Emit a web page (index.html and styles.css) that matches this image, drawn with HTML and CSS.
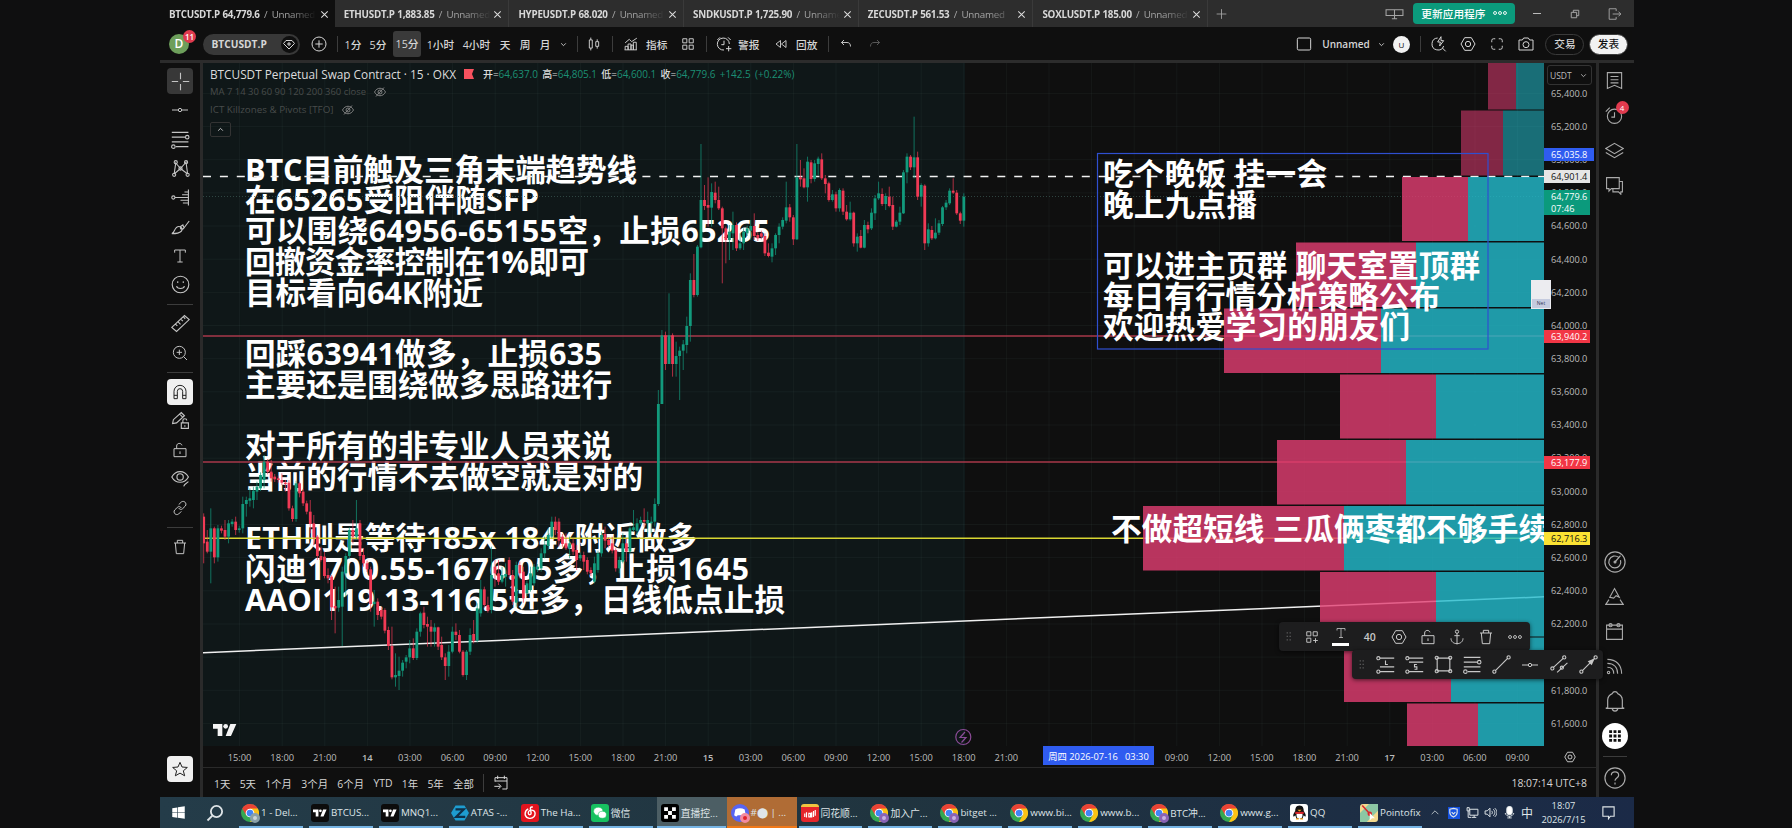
FILE: index.html
```html
<!DOCTYPE html>
<html lang="zh-CN">

<head>
    <meta charset="utf-8" />
    <meta name="viewport" content="width=device-width, initial-scale=1.0">
    <title>BTCUSDT.P 64,779.6 / Unnamed</title>
    <link rel="stylesheet" href="styles.css">
</head>

<body>
    <!-- icon sprite -->
    <svg class="sprite">
        <symbol id="close" viewBox="0 0 24 24"><path d="M5 5l14 14M19 5L5 19" /></symbol>
        <symbol id="plus" viewBox="0 0 24 24"><path d="M12 3v18M3 12h18" /></symbol>
        <symbol id="plus-circle" viewBox="0 0 24 24"><circle cx="12" cy="12" r="10.5" /><path d="M12 6.500v11M6.500 12h11" /></symbol>
        <symbol id="chev" viewBox="0 0 24 24"><path d="M4 8l8 8 8-8" /></symbol>
        <symbol id="chev-up" viewBox="0 0 24 24"><path d="M4 16l8-8 8 8" /></symbol>
        <symbol id="candles" viewBox="0 0 24 24"><path d="M4 5h5v14H4zM6.500 1v4M6.500 19v4M15 8h5v8h-5zM17.500 4v4M17.500 16v4" /></symbol>
        <symbol id="indicator" viewBox="0 0 24 24"><path d="M2 10l7-6 4 4 9-6M2 22v-6h5v6M7 22V12h5v10M12 22v-8h4v8M16 22V9h5v13M1 22h21" /></symbol>
        <symbol id="grid4" viewBox="0 0 24 24"><path d="M3 3h7v7H3zM14 3h7v7h-7zM3 14h7v7H3zM14 14h7v7h-7z" /></symbol>
        <symbol id="grid-plus" viewBox="0 0 24 24"><path d="M3 3h7v7H3zM14 3h7v7h-7zM3 14h7v7H3zM18 14v8M14 18h8" /></symbol>
        <symbol id="alarm-plus" viewBox="0 0 24 24"><path d="M20 12a9 9 0 1 0-8 9M12 7v6H8M2 6l4-4M18 2l4 4M19 15v8M15 19h8" /></symbol>
        <symbol id="alarm" viewBox="0 0 24 24"><circle cx="12" cy="13" r="9" /><path d="M12 8v6H8M1 7l5-5" /></symbol>
        <symbol id="rewind" viewBox="0 0 24 24"><path d="M11 5v14l-9-7zM22 5v14l-9-7z" /></symbol>
        <symbol id="undo" viewBox="0 0 24 24"><path d="M8 4L3 9l5 5M3 9h11c5 0 7 3 7 8" /></symbol>
        <symbol id="redo" viewBox="0 0 24 24"><path d="M16 4l5 5-5 5M21 9H10c-5 0-7 3-7 8" /></symbol>
        <symbol id="square" viewBox="0 0 24 24"><rect x="2" y="3" width="20" height="18" rx="2" /></symbol>
        <symbol id="flash-search" viewBox="0 0 24 24"><path d="M10 3a9 9 0 1 0 9 12M17 18l5 5M15 1l-5 8h4l-1 6 6-8h-4z" /></symbol>
        <symbol id="hex" viewBox="0 0 24 24"><path d="M7 2.500h10l5.500 9.500-5.500 9.500H7L1.500 12z" /><circle cx="12" cy="12" r="4" /></symbol>
        <symbol id="full" viewBox="0 0 24 24"><path d="M3 9V6a3 3 0 0 1 3-3h3M15 3h3a3 3 0 0 1 3 3v3M21 15v3a3 3 0 0 1-3 3h-3M9 21H6a3 3 0 0 1-3-3v-3" /></symbol>
        <symbol id="camera" viewBox="0 0 24 24"><path d="M1.500 6h5l2-3h7l2 3h5v15h-21z" /><circle cx="12" cy="13" r="4.500" /></symbol>
        <symbol id="cross" viewBox="0 0 24 24"><path d="M12 1v8M12 15v8M1 12h8M15 12h8" /></symbol>
        <symbol id="hline" viewBox="0 0 24 24"><path d="M0 12h9M15 12h9" /><circle cx="12" cy="12" r="2.500" /></symbol>
        <symbol id="fib" viewBox="0 0 24 24"><path d="M1 3h21M1 9h17M1 15h21M6 21h16" /><circle cx="20.500" cy="9" r="2.200" /><circle cx="3" cy="21" r="2.200" /></symbol>
        <symbol id="pattern" viewBox="0 0 24 24"><path d="M4 19L6 5l6 7 7-8 2 15M4 19l8-7 9 7" /><circle cx="4" cy="20" r="2" /><circle cx="6" cy="4" r="2" /><circle cx="12" cy="12" r="2" /><circle cx="19" cy="4" r="2" /><circle cx="21" cy="20" r="2" /></symbol>
        <symbol id="forecast" viewBox="0 0 24 24"><path d="M5 12h17M22 2v20M17 5h5M14 8.500h8M12 15.500h10M15 19h7" /><circle cx="3" cy="12" r="2" /></symbol>
        <symbol id="brush" viewBox="0 0 24 24"><path d="M1 21c4-1 3-9 9-9 4 0 5 4 3 6-3 3-8 3-12 3zM12 12c-1 4 3 5 5 1l6-8M12 12l3-2 1 3" /></symbol>
        <symbol id="text" viewBox="0 0 24 24"><path d="M4 7V3h16v4M12 3v18M8 21h8" /></symbol>
        <symbol id="smile" viewBox="0 0 24 24"><circle cx="12" cy="12" r="10.500" /><path d="M7 14c1 4 9 4 10 0M8.500 8v2M15.500 8v2" /></symbol>
        <symbol id="ruler" viewBox="0 0 24 24"><path d="M1 17L17 2l6 5L7 22zM6 13l2 2M9 10l3 3M13 7l2 2M16 4l2 2" /></symbol>
        <symbol id="zoom-in" viewBox="0 0 24 24"><circle cx="11" cy="11" r="9" /><path d="M17.500 17.500l5 5M11 7v8M7 11h8" /></symbol>
        <symbol id="magnet" viewBox="0 0 24 24"><path d="M3 22V11a9 9 0 0 1 18 0v11h-5V11a4 4 0 0 0-8 0v11zM3 17h5M16 17h5" /></symbol>
        <symbol id="pen-lock" viewBox="0 0 24 24"><path d="M2 16l1-5L13 2l4 4L7 15zM11 4l4 4M13 15h9v7h-9zM15 15v-3c0-3 5-3 5 0M17.500 18v2" /></symbol>
        <symbol id="unlock" viewBox="0 0 24 24"><path d="M3 10h18v12H3zM7 10V6c0-5 7-5 8-1M12 14v4" /></symbol>
        <symbol id="eye" viewBox="0 0 24 24"><path d="M1 10c5-9 16-9 21 0-5 9-16 9-21 0z" /><circle cx="11.500" cy="10" r="4" /><path d="M16 22c1-4 4-4 6-6" /></symbol>
        <symbol id="eye-off" viewBox="0 0 24 24"><path d="M1 12c5-10 17-10 22 0-5 10-17 10-22 0zM4 21L20 3" /><circle cx="12" cy="12" r="4" /></symbol>
        <symbol id="link" viewBox="0 0 24 24"><path d="M10 7l4-4c4-3 9 2 6 6l-4 4c-2 2-5 1-6-1M14 17l-4 4c-4 3-9-2-6-6l4-4c2-2 5-1 6 1" /></symbol>
        <symbol id="trash" viewBox="0 0 24 24"><path d="M3 6h18M8 6V2h8v4M5 6l1.500 16h11L19 6" /></symbol>
        <symbol id="star" viewBox="0 0 24 24"><path d="M12 2l3 7 8 .7-6 5 2 7.500-7-4-7 4 2-7.500-6-5 8-.7z" /></symbol>
        <symbol id="list" viewBox="0 0 24 24"><path d="M3 2h18v20l-9-4-9 4zM7 7h10M7 11h10M7 15h10" /></symbol>
        <symbol id="layers" viewBox="0 0 24 24"><path d="M12 3l11 6.500L12 16 1 9.500zM1 14.500L12 21l11-6.500" /></symbol>
        <symbol id="chat" viewBox="0 0 24 24"><path d="M2 2h16v14H8l-3 3v-3H2zM18 7h4v13h-2v3l-3-3h-7v-4" /></symbol>
        <symbol id="radar" viewBox="0 0 24 24"><circle cx="12" cy="12" r="11" /><path d="M16 7a6.500 6.500 0 1 0 2 3M12 12l6-7" /><circle cx="12" cy="12" r="1" /></symbol>
        <symbol id="prism" viewBox="0 0 24 24"><path d="M12 2l6 11-4-2-3 3-5-1zM5 16l-4 6h22l-4-6" /></symbol>
        <symbol id="calendar" viewBox="0 0 24 24"><path d="M2 4h20v18H2zM2 9h20" /><circle cx="7" cy="4" r="2" /><circle cx="17" cy="4" r="2" /></symbol>
        <symbol id="signal" viewBox="0 0 24 24"><path d="M3 3c11 0 18 7 18 18M3 8c8 0 13 5 13 13M3 13c5 0 8 3 8 8" /><circle cx="4.500" cy="19.500" r="1.500" /></symbol>
        <symbol id="bell" viewBox="0 0 24 24"><path d="M4 19V11a8 8 0 0 1 5-7c1-3 5-3 6 0a8 8 0 0 1 5 7v8l2 1H2zM9 20c0 4 6 4 6 0" /></symbol>
        <symbol id="apps" viewBox="0 0 24 24"><path class="solid" d="M2 2h5v5H2zM9.500 2h5v5h-5zM17 2h5v5h-5zM2 9.500h5v5H2zM9.500 9.500h5v5h-5zM17 9.500h5v5h-5zM2 17h5v5H2zM9.500 17h5v5h-5zM17 17h5v5h-5z" /></symbol>
        <symbol id="help" viewBox="0 0 24 24"><circle cx="12" cy="12" r="11" /><path d="M8 9c0-5 8-5 8 0 0 3-4 3-4 6M12 17v2" /></symbol>
        <symbol id="goto" viewBox="0 0 24 24"><path d="M3 10V4h18v17h-7M7 1v5M17 1v5M21 9H3M2 17h9M8 13l4 4-4 4" /></symbol>
        <symbol id="anchor" viewBox="0 0 24 24"><circle cx="12" cy="4" r="2.500" /><path d="M12 6.500V23M8 10h8M3 14c0 5 4 8 9 8s9-3 9-8" /></symbol>
        <symbol id="dots" viewBox="0 0 24 24"><circle cx="3.500" cy="12" r="2.500" /><circle cx="12" cy="12" r="2.500" /><circle cx="20.500" cy="12" r="2.500" /></symbol>
        <symbol id="grip" viewBox="0 0 10 24"><path stroke-dasharray="2 4" d="M2 4v18M7 4v18" /></symbol>
        <symbol id="long" viewBox="0 0 24 24"><path d="M5 4h18M5 15h18M5 21h18M12 7v5h3" /><circle cx="3" cy="4" r="2" /><circle cx="3" cy="21" r="2" /></symbol>
        <symbol id="short" viewBox="0 0 24 24"><path d="M5 4h18M5 9h18M5 21h18M15 12h-3v3h3v3h-3" /><circle cx="3" cy="4" r="2" /><circle cx="3" cy="21" r="2" /></symbol>
        <symbol id="rect" viewBox="0 0 24 24"><path d="M4 4h16v16H4z" /><circle cx="3.500" cy="3.500" r="2" /><circle cx="20.500" cy="3.500" r="2" /><circle cx="3.500" cy="20.500" r="2" /><circle cx="20.500" cy="20.500" r="2" /></symbol>
        <symbol id="trend" viewBox="0 0 24 24"><path d="M4 20L20 4" /><circle cx="3" cy="21" r="2" /><circle cx="21" cy="3" r="2" /></symbol>
        <symbol id="channel" viewBox="0 0 24 24"><path d="M4 16L17 4M9 22l13-12" /><circle cx="3" cy="17" r="2" /><circle cx="18" cy="3" r="2" /><circle cx="15" cy="16" r="2" /></symbol>
        <symbol id="arrow" viewBox="0 0 24 24"><path d="M4 20L20 4" /><path class="solid" d="M20 4l-9 4 5 5z" /><circle cx="3" cy="21" r="2" /><circle cx="21" cy="3" r="2" /></symbol>
        <symbol id="screens" viewBox="0 0 36 24"><path d="M2 4h32v11H2zM18 4v17M13 21h10" /></symbol>
        <symbol id="exit" viewBox="0 0 24 24"><path d="M14 7V3H2v18h12v-4M8 12h14M18 8l4 4-4 4" /></symbol>
        <symbol id="restore" viewBox="0 0 24 24"><path d="M3 8h13v13H3zM8 8V3h13v13h-5" /></symbol>
        <symbol id="chrome" viewBox="0 0 24 24">
            <circle class="f-green" cx="12" cy="12" r="12" />
            <path class="f-red" d="M1.600 6A12 12 0 0 1 22.400 6L12 12z" /><path class="f-red" d="M1.600 6L7 15l5-3 10.400-6z" />
            <path class="f-yellow" d="M22.400 6A12 12 0 0 1 12 24l5-9-5-9z" />
            <circle class="f-white" cx="12" cy="12" r="5.800" /><circle class="f-blue" cx="12" cy="12" r="4.500" />
        </symbol>
        <symbol id="tv" viewBox="0 0 36 24"><path class="solid" d="M0 3h14v18H7V10H0zM26 3h9l-8 18h-8z" /><circle class="solid" cx="19" cy="6.500" r="3.500" /></symbol>
    </svg>

    <div class="screen">
        <header class="tabs">
            <div class="tab active"><span><b>BTCUSDT.P 64,779.6</b> / Unnamed</span><svg class="i"><use href="#close" /></svg></div>
            <div class="tab"><span><b>ETHUSDT.P 1,883.85</b> / Unnamed</span><svg class="i"><use href="#close" /></svg></div>
            <div class="tab"><span><b>HYPEUSDT.P 68.020</b> / Unnamed</span><svg class="i"><use href="#close" /></svg></div>
            <div class="tab"><span><b>SNDKUSDT.P 1,725.90</b> / Unnamed</span><svg class="i"><use href="#close" /></svg></div>
            <div class="tab"><span><b>ZECUSDT.P 561.53</b> / Unnamed</span><svg class="i"><use href="#close" /></svg></div>
            <div class="tab"><span><b>SOXLUSDT.P 185.00</b> / Unnamed</span><svg class="i"><use href="#close" /></svg></div>
            <svg class="i new-tab"><use href="#plus" /></svg>
            <div class="window-tools">
                <svg class="i wide"><use href="#screens" /></svg>
                <button class="update">更新应用程序 <svg class="i"><use href="#dots" /></svg></button>
                <span class="min"></span>
                <svg class="i small"><use href="#restore" /></svg>
                <svg class="i"><use href="#exit" /></svg>
            </div>
        </header>

        <nav class="toolbar">
            <span class="avatar">D<em>11</em></span>
            <span class="symbol-pill">BTCUSDT.P<i><svg class="i"><path d="M4 3.500h6l2.500 3L7 12 1.500 6.500zM7 5v4M5 7h4" /></svg></i></span>
            <svg class="i l"><use href="#plus-circle" /></svg>
            <hr>
            <span>1分</span><span>5分</span><span class="on">15分</span><span>1小时</span><span>4小时</span>
            <span>天</span><span>周</span><span>月</span>
            <svg class="i xs"><use href="#chev" /></svg>
            <hr>
            <svg class="i"><use href="#candles" /></svg>
            <hr>
            <svg class="i"><use href="#indicator" /></svg><span class="lbl">指标</span>
            <svg class="i"><use href="#grid4" /></svg>
            <hr>
            <svg class="i l"><use href="#alarm-plus" /></svg><span class="lbl">警报</span>
            <svg class="i s"><use href="#rewind" /></svg><span class="lbl">回放</span>
            <hr>
            <svg class="i s"><use href="#undo" /></svg>
            <svg class="i s dim"><use href="#redo" /></svg>
            <span></span>
            <svg class="i l"><use href="#square" /></svg>
            <span class="name">Unnamed</span>
            <svg class="i xs"><use href="#chev" /></svg>
            <span class="user">U</span>
            <hr>
            <svg class="i l"><use href="#flash-search" /></svg>
            <svg class="i l"><use href="#hex" /></svg>
            <svg class="i"><use href="#full" /></svg>
            <svg class="i l"><use href="#camera" /></svg>
            <span class="pill">交易</span>
            <span class="pill white">发表</span>
        </nav>

        <main class="main">
            <aside class="left-tools">
                <span class="tool gray"><svg class="i xl"><use href="#cross" /></svg></span>
                <span class="tool"><svg class="i l"><use href="#hline" /></svg></span>
                <span class="tool"><svg class="i xl"><use href="#fib" /></svg></span>
                <span class="tool"><svg class="i xl"><use href="#pattern" /></svg></span>
                <span class="tool"><svg class="i xl"><use href="#forecast" /></svg></span>
                <span class="tool"><svg class="i xl"><use href="#brush" /></svg></span>
                <span class="tool"><svg class="i l"><use href="#text" /></svg></span>
                <span class="tool"><svg class="i xl"><use href="#smile" /></svg></span>
                <hr>
                <span class="tool"><svg class="i xl"><use href="#ruler" /></svg></span>
                <span class="tool"><svg class="i l"><use href="#zoom-in" /></svg></span>
                <hr>
                <span class="tool white"><svg class="i l"><use href="#magnet" /></svg></span>
                <span class="tool"><svg class="i xl"><use href="#pen-lock" /></svg></span>
                <span class="tool"><svg class="i l"><use href="#unlock" /></svg></span>
                <span class="tool"><svg class="i xl"><use href="#eye" /></svg></span>
                <span class="tool"><svg class="i l"><use href="#link" /></svg></span>
                <hr>
                <span class="tool"><svg class="i l"><use href="#trash" /></svg></span>
                <span class="tool white last"><svg class="i l"><use href="#star" /></svg></span>
            </aside>

            <section class="chart">
                <div class="pane">
                    <svg class="plot" viewBox="203 63 1341 683">
                        <rect class="session" x="203" y="63" width="762" height="683" />
                        <g id="grid"></g>
                        <g class="note">
                            <text x="245" y="180.700" textLength="392">BTC目前触及三角末端趋势线</text>
                            <text x="245" y="211.400" textLength="294">在65265受阻伴随SFP</text>
                            <text x="245" y="242.100" textLength="525">可以围绕64956-65155空，止损65265</text>
                            <text x="245" y="272.800" textLength="344">回撤资金率控制在1%即可</text>
                            <text x="245" y="303.500" textLength="238">目标看向64K附近</text>
                            <text x="245" y="364.900" textLength="357">回踩63941做多，止损635</text>
                            <text x="245" y="395.600" textLength="367">主要还是围绕做多思路进行</text>
                            <text x="245" y="457" textLength="367">对于所有的非专业人员来说</text>
                            <text x="245" y="487.700" textLength="398">当前的行情不去做空就是对的</text>
                            <text x="245" y="549.100" textLength="452">ETH则是等待185x 184x附近做多</text>
                            <text x="245" y="579.800" textLength="504">闪迪1700.55-1676.05多，止损1645</text>
                            <text x="245" y="610.500" textLength="540">AAOI119.13-116.5进多，日线低点止损</text>
                        </g>
                        <path class="dash" d="M203 176.500H1544" />
                        <path class="last-price" d="M203 196.500H1544" />
                        <path class="red-line" d="M203 336H1544M203 462H1544" />
                        <path class="yellow-line" d="M203 538.300H1544" />
                        <path class="trend" d="M203 652.700L1544 596.800" />
                        <g id="profile"></g>
                        <g id="candle-layer"></g>
                        <rect class="selection" x="1097.500" y="153.500" width="390.500" height="195.500" />
                        <g class="note">
                            <text x="1103" y="184.800" textLength="224">吃个晚饭 挂一会</text>
                            <text x="1103" y="215.500" textLength="154">晚上九点播</text>
                            <text x="1103" y="276.900" textLength="377">可以进主页群 聊天室置顶群</text>
                            <text x="1103" y="307.600" textLength="337">每日有行情分析策略公布</text>
                            <text x="1103" y="338.300" textLength="307">欢迎热爱学习的朋友们</text>
                            <text x="1111" y="539.500" textLength="438">不做超短线 三瓜俩枣都不够手续</text>
                        </g>
                        <g class="flash"><circle cx="963.300" cy="737" r="7.500" /><path d="M965 732l-5 5.500h6l-4.500 5" /></g>
                    </svg>
                    <div class="legend">
                        <div class="title">BTCUSDT Perpetual Swap Contract · 15 · OKX
                            <svg class="flag" viewBox="0 0 10 10"><path d="M0 0h10L8 5l2 5H0z" /></svg>
                            <small>开=<b>64,637.0</b> 高=<b>64,805.1</b> 低=<b>64,600.1</b> 收=<b>64,779.6 +142.5 (+0.22%)</b></small>
                        </div>
                        <div class="study">MA 7 14 30 60 90 120 200 360 close <svg class="i s"><use href="#eye-off" /></svg></div>
                        <div class="study wide">ICT Killzones &amp; Pivots [TFO] <svg class="i s"><use href="#eye-off" /></svg></div>
                        <div class="fold"><svg class="i xs"><use href="#chev-up" /></svg></div>
                    </div>
                    <svg class="tv-logo"><use href="#tv" /></svg>
                </div>

                <div class="price-axis" id="priceAxis">
                    <span class="unit">USDT <svg class="i xs"><use href="#chev" /></svg></span>
                    <span class="tag blue">65,035.8</span>
                    <span class="tag light">64,901.4</span>
                    <span class="tag green">64,779.6<br>07:46</span>
                    <span class="tag red r1">63,940.2</span>
                    <span class="tag red r2">63,177.9</span>
                    <span class="tag yellow">62,716.3</span>
                </div>
                <div class="net"><span>Net</span></div>

                <div class="time-axis">
                    <div id="timeAxis"></div>
                    <span class="cursor-time">周四 2026-07-16 &nbsp; 03:30</span>
                </div>
                <div class="corner"><svg class="i s"><use href="#hex" /></svg></div>

                <footer class="ranges">
                    <span>1天</span><span>5天</span><span>1个月</span><span>3个月</span><span>6个月</span><span>YTD</span><span>1年</span><span>5年</span><span>全部</span>
                    <hr>
                    <svg class="i l"><use href="#goto" /></svg>
                    <span class="clock">18:07:14 UTC+8</span>
                </footer>
            </section>

            <aside class="right-tools">
                <span><svg class="i xl"><use href="#list" /></svg></span>
                <span><svg class="i xl"><use href="#alarm" /></svg><em>4</em></span>
                <span><svg class="i xl"><use href="#layers" /></svg></span>
                <span><svg class="i xl"><use href="#chat" /></svg></span>
                <div class="push"></div>
                <span><svg class="i xxl"><use href="#radar" /></svg></span>
                <span><svg class="i xl"><use href="#prism" /></svg></span>
                <span><svg class="i xl"><use href="#calendar" /></svg></span>
                <span><svg class="i xl"><use href="#signal" /></svg></span>
                <span><svg class="i xxl"><use href="#bell" /></svg></span>
                <span class="round"><svg class="i"><use href="#apps" /></svg></span>
                <hr>
                <span class="help"><svg class="i xxl"><use href="#help" /></svg></span>
            </aside>

            <div class="floating edit">
                <svg class="grip"><use href="#grip" /></svg>
                <span><svg class="i"><use href="#grid-plus" /></svg></span>
                <span class="color"><svg class="i"><use href="#text" /></svg></span>
                <span>40</span>
                <span><svg class="i l"><use href="#hex" /></svg></span>
                <span><svg class="i l"><use href="#unlock" /></svg></span>
                <span><svg class="i l"><use href="#anchor" /></svg></span>
                <span><svg class="i l"><use href="#trash" /></svg></span>
                <span><svg class="i"><use href="#dots" /></svg></span>
            </div>
            <div class="floating favs">
                <svg class="grip"><use href="#grip" /></svg>
                <span><svg class="i xl"><use href="#long" /></svg></span>
                <span><svg class="i xl"><use href="#short" /></svg></span>
                <span><svg class="i xl"><use href="#rect" /></svg></span>
                <span><svg class="i xl"><use href="#fib" /></svg></span>
                <span><svg class="i xl"><use href="#trend" /></svg></span>
                <span><svg class="i l"><use href="#hline" /></svg></span>
                <span><svg class="i xl"><use href="#channel" /></svg></span>
                <span><svg class="i xl"><use href="#arrow" /></svg></span>
            </div>
        </main>

        <div class="taskbar">
            <svg class="win" viewBox="0 0 24 24"><path d="M2 5l8-1.200V11.500H2zM11 3.600L22 2v9.500H11zM2 12.500h8v7.700L2 19zM11 12.500h11V22l-11-1.600z" /></svg>
            <svg class="search" viewBox="0 0 24 24"><circle cx="14" cy="10" r="7.500" /><path d="M8.500 15.500L2 22" /></svg>
            <div class="apps">
                <div class="app"><svg class="ico"><use href="#chrome" /></svg><u class="badge-user pale"></u>1 - Del...</div>
                <div class="app"><b class="ico black"><svg><use href="#tv" /></svg></b>BTCUS...</div>
                <div class="app"><b class="ico black"><svg><use href="#tv" /></svg></b>MNQ1...</div>
                <div class="app"><svg class="ico" viewBox="0 0 24 24"><path class="atas" d="M6 2h12l6 10-6 10H6L0 12z" /><path class="atas-z" d="M6 7h11L7 17h12" /></svg>ATAS -...</div>
                <div class="app"><b class="ico netease"><svg viewBox="0 0 24 24"><path d="M17 2c-4-1-5 1-4 5l1 5c0 4-5 4-5 0 0-3 3-5 6-5 6 0 7 7 4 11-4 5-13 4-15-2-1-5 1-9 5-11" /></svg></b>The Ha...</div>
                <div class="app"><b class="ico wechat"><svg viewBox="0 0 24 24"><ellipse cx="9" cy="9" rx="8" ry="7" /><ellipse cx="16" cy="15" rx="7" ry="6" /></svg></b>微信</div>
                <div class="app hover"><b class="ico okx"><svg viewBox="0 0 24 24"><path d="M2 2h6.500v6.500H2zM15.500 2H22v6.500h-6.500zM8.700 8.700h6.600v6.600H8.700zM2 15.500h6.500V22H2zM15.500 15.500H22V22h-6.500z" /></svg></b>直播控...</div>
                <div class="app alert"><b class="ico discord"><svg viewBox="0 0 24 24"><path d="M4 6c5-3 11-3 16 0l2 10c-3 3-5 2-6 0H8c-1 2-3 3-6 0z" /></svg></b><u class="badge-user rec"></u>#⬤ | ...</div>
                <div class="app"><b class="ico ths"><svg viewBox="0 0 24 24"><path d="M3 11v6M6 9v9M10 11h3v6h-3zM15 9v9M18 7v10M21 5v10" /></svg></b>同花顺...</div>
                <div class="app"><svg class="ico"><use href="#chrome" /></svg><u class="badge-user"></u>加入广...</div>
                <div class="app"><svg class="ico"><use href="#chrome" /></svg><u class="badge-user"></u>bitget ...</div>
                <div class="app"><svg class="ico"><use href="#chrome" /></svg>www.bi...</div>
                <div class="app"><svg class="ico"><use href="#chrome" /></svg>www.b...</div>
                <div class="app"><svg class="ico"><use href="#chrome" /></svg><u class="badge-user"></u>BTC冲...</div>
                <div class="app"><svg class="ico"><use href="#chrome" /></svg>www.g...</div>
                <div class="app"><b class="ico qq"><svg viewBox="0 0 24 24"><path class="k" d="M12 2c5 0 6 4 6 8 2 3 4 7 2 8l-2-2-2 5H8l-2-5-2 2c-2-1 0-5 2-8 0-4 1-8 6-8z" /><path class="w" d="M8 13h8c1 5-1 8-4 8s-5-3-4-8z" /><path class="r" d="M7 12h10v1H7z" /><path class="o" d="M9 8h6l-3 2.500zM7 20h4v2H7zM13 20h4v2h-4z" /></svg></b>QQ</div>
                <div class="app"><b class="ico pfix"><svg viewBox="0 0 24 24"><path class="g" d="M0 12L12 0h12v9L9 24H0z" /><path class="r" d="M3 2l10 11" /><circle class="r" cx="13" cy="13" r="2" /><path class="w" d="M13 12v10l3-3h4z" /></svg></b>Pointofix</div>
            </div>
            <div class="tray">
                <svg class="i"><use href="#chev-up" /></svg>
                <b class="shield"><svg viewBox="0 0 24 24"><path d="M12 3l8 2v7c0 5-4 8-8 10-4-2-8-5-8-10V5zM8 11l4 4 4-4" /></svg></b>
                <svg viewBox="0 0 24 24"><path d="M7 6h15v11H7zM11 21h8M15 17v4M2 3v6h4V3zM4 9v12h6" /></svg>
                <svg viewBox="0 0 24 24"><path d="M2 9h4l5-5v16l-5-5H2zM14 9c2 2 2 4 0 6M17 6c4 3 4 9 0 12M20 4c5 5 5 11 0 16" /></svg>
                <svg class="mic" viewBox="0 0 24 24"><rect x="7" y="1" width="10" height="15" rx="4" /><path d="M4 13c2 8 14 8 16 0M12 19v3M8 22h8" /></svg>
                <span>中</span>
                <div class="date">18:07<br>2026/7/15</div>
                <svg class="notif" viewBox="0 0 24 24"><path d="M3 3h18v15h-6l-3 4v-4H3z" /></svg>
            </div>
        </div>
    </div>

    <script src="chart.js"></script>
</body>

</html>
```
FILE: styles.css
```css
* {
    box-sizing: border-box;
}

body {
    margin: 0;
    background: #0f0f10;
    color: #d6d6d6;
    font: 10.5px "Open Sans", "Noto Sans CJK SC", sans-serif;
    overflow: hidden;
}

hr {
    margin: 0;
    border: 0;
    background: #3c3c3c;
}

em,
i,
u {
    font-style: normal;
    text-decoration: none;
}

svg {
    fill: none;
    stroke: currentColor;
    flex: none;
}

.sprite {
    position: absolute;
    width: 0;
    height: 0;
}

.solid { fill: currentColor; stroke: none; }
.f-green { fill: #34a853; stroke: none; }
.f-red { fill: #ea4335; stroke: none; }
.f-yellow { fill: #fbc116; stroke: none; }
.f-white { fill: #fff; stroke: none; }
.f-blue { fill: #4285f4; stroke: none; }

/* icon sizes */
.i { width: 14px; height: 14px; stroke-width: 1.6; }
.i.xs { width: 7px; height: 7px; stroke-width: 3; }
.i.s { width: 12px; height: 12px; stroke-width: 1.8; }
.i.l { width: 16px; height: 16px; stroke-width: 1.5; }
.i.xl { width: 19px; height: 19px; stroke-width: 1.4; }
.i.xxl { width: 22px; height: 22px; stroke-width: 1.3; }
.dim { opacity: .4; }

.screen {
    width: 1472px;
    height: 828px;
    margin: 0 auto;
    display: grid;
    grid-template-rows: 27px 36px 734px 31px;
    background: #0f0f0f;
}

/* tabs */
.tabs {
    display: flex;
    align-items: center;
    background: #2d2d2d;
    font-size: 9.8px;
    color: #a5a5a5;
}

.tab {
    width: 174.700px;
    height: 27px;
    padding: 1px 5px 0 9px;
    display: flex;
    align-items: center;
    justify-content: space-between;
    border-right: 1px solid #3a3a3a;
}

.tab span {
    width: 147px;
    overflow: hidden;
    white-space: nowrap;
    letter-spacing: -.25px;
    word-spacing: 2px;
    mask-image: linear-gradient(90deg, #000 82%, transparent 100%);
}

.tab b {
    font-weight: 700;
    word-spacing: .3px;
    color: #d8d8d8;
}

.tab .i {
    width: 11px;
    height: 11px;
    stroke-width: 2.2;
    color: #ddd;
}

.tab.active {
    background: #0f0f0f;
    border: 0;
}

.new-tab {
    width: 13px;
    margin-left: 7px;
}

.window-tools {
    margin-left: auto;
    padding-right: 12px;
    display: flex;
    align-items: center;
}

.window-tools .wide {
    width: 19px;
    margin-right: 9px;
    stroke-width: 2;
}

.update {
    width: 102px;
    height: 21px;
    padding: 0 0 1px;
    border: 0;
    border-radius: 4px;
    background: #0b9a7c;
    color: #fff;
    font: 500 10.7px "Noto Sans CJK SC", sans-serif;
    display: flex;
    align-items: center;
    justify-content: center;
    gap: 7px;
}

.min {
    width: 8px;
    height: 1px;
    margin: 0 29px 0 18px;
    background: #bbb;
}

.window-tools .small {
    width: 10px;
    margin-right: 28px;
    stroke-width: 2.4;
}

/* top toolbar */
.toolbar {
    display: grid;
    grid-template-columns: 41px 100px 35px 3px 28px 22px 36px 31px 41px 16px 24px 16px 21px 6px 28px 8px 30px 27px 30px 6px 29px 28px 30px 26px 12px 24px 34px 1fr 26px 58px 14px 25px 14px 22px 36px 23px 34px 44px 43px 4px;
    align-items: center;
    justify-items: center;
    padding-top: 1px;
    height: 36px;
    border-bottom: 3px solid #2c2c2c;
    font-size: 10.7px;
    font-weight: 500;
}

.toolbar hr {
    width: 1px;
    height: 16px;
}

.toolbar .lbl {
    justify-self: start;
}

.toolbar .on {
    width: 28px;
    height: 26px;
    border-radius: 3px;
    background: #3a3a3a;
    text-align: center;
    line-height: 26px;
}

.avatar {
    position: relative;
    width: 20px;
    height: 20px;
    margin-right: 3px;
    border-radius: 50%;
    background: #6d9f5b;
    color: #fff;
    font-size: 12px;
    font-weight: 600;
    line-height: 20px;
    text-align: center;
}

.avatar em,
.right-tools em {
    position: absolute;
    top: -4px;
    right: -7px;
    width: 13px;
    height: 13px;
    border-radius: 50%;
    background: #e03a4e;
    color: #fff;
    font-size: 8px;
    line-height: 13px;
    text-align: center;
}

.symbol-pill {
    width: 97px;
    height: 21px;
    padding: 0 2px 0 9px;
    border-radius: 11px;
    background: #383838;
    display: flex;
    align-items: center;
    justify-content: space-between;
    font-size: 10.2px;
    font-weight: 700;
}

.symbol-pill i {
    width: 17px;
    height: 17px;
    border-radius: 50%;
    background: #0f0f0f;
    display: grid;
    place-items: center;
}

.symbol-pill .i {
    stroke-width: 1;
}

.toolbar .name {
    font-size: 10px;
    font-weight: 600;
}

.user {
    width: 17px;
    height: 17px;
    border-radius: 50%;
    background: #f2f2f2;
    color: #111;
    font-size: 8px;
    line-height: 17px;
    text-align: center;
}

.pill {
    width: 39px;
    height: 21px;
    border: 1px solid #3a3a3a;
    border-radius: 11px;
    line-height: 19px;
    text-align: center;
}

.pill.white {
    background: #f2f2f2;
    color: #111;
}

/* main area */
.main {
    position: relative;
    display: grid;
    grid-template-columns: 40px 1396px 36px;
}

.left-tools {
    display: flex;
    flex-direction: column;
    align-items: center;
    padding: 3.500px 0 15px;
    height: 734px;
    color: #c4c4c4;
}

.left-tools .tool {
    width: 26px;
    height: 26px;
    margin: 1.550px 0;
    border-radius: 4px;
    display: grid;
    place-items: center;
    flex: none;
}

.left-tools .tool.gray { background: #383838; }
.left-tools .tool.white { background: #f0f0f0; color: #222; }
.left-tools .tool.last { margin: auto 0 0; }

.left-tools hr {
    width: 26px;
    height: 1px;
    margin: 4.400px 0;
    flex: none;
}

.chart {
    display: grid;
    grid-template-columns: 1341px 52px;
    grid-template-rows: 683px 22px 29px;
    border-left: 3px solid #2a2a2a;
    border-right: 3px solid #2a2a2a;
    width: 1399px;
    position: relative;
}

.pane {
    position: relative;
    overflow: hidden;
}

.plot {
    display: block;
    width: 1341px;
    height: 683px;
}

.session { fill: #0f1718; stroke: none; }
.grid-line { stroke: #8fb3a8; stroke-opacity: .06; }
.note text { fill: #fff; stroke: none; font: 700 30.6px "Open Sans", "Noto Sans CJK SC", sans-serif; }
.dash { stroke: #f2f2f2; stroke-width: 1.4; stroke-dasharray: 8 8.9; }
.last-price { stroke: #3c5a55; stroke-width: .7; stroke-dasharray: 1 2; }
.red-line { stroke: #a8394a; stroke-width: 1.3; }
.yellow-line { stroke: #d8d632; stroke-width: 1.4; }
.trend { stroke: #f0f0f0; stroke-width: 1.5; }
.selection { stroke: #2f4fd0; stroke-width: 1.2; }
.sell { fill: #e23d72; stroke: none; fill-opacity: .8; }
.buy { fill: #23bdce; stroke: none; fill-opacity: .8; }
.far { fill-opacity: .55; }
.up { fill: #129a7c; stroke: #129a7c; }
.down { fill: #f03a55; stroke: #f03a55; }
.flash { stroke: #8a4b96; stroke-width: 1.2; }

.legend {
    position: absolute;
    top: 1.500px;
    left: 7px;
}

.title {
    display: flex;
    align-items: center;
    height: 18px;
    font-size: 11.8px;
    font-weight: 500;
    white-space: nowrap;
    color: #dcdcdc;
}

.title .flag {
    width: 10px;
    height: 10px;
    margin: 0 9px 0 8px;
    fill: #f7525f;
    stroke: none;
}

.title small {
    font-size: 9.950px;
    word-spacing: 1.700px;
}

.title b {
    font-weight: 400;
    color: #1c8f74;
}

.study {
    display: flex;
    align-items: center;
    gap: 8px;
    height: 18.300px;
    font-size: 9.450px;
    color: #484c4b;
}

.study.wide {
    font-size: 9.800px;
}

.study .i {
    color: #8a8a8a;
}

.fold {
    width: 21px;
    height: 15px;
    margin-top: 3px;
    border: 1px solid #333;
    border-radius: 2px;
    display: grid;
    place-items: center;
}

.tv-logo {
    position: absolute;
    left: 10px;
    bottom: 8px;
    width: 24px;
    height: 16px;
    color: #f5f5f5;
}

.price-axis {
    position: relative;
    padding-top: 13.700px;
    font-size: 9.200px;
    color: #bcbcbc;
}

.price-axis .tick {
    height: 33.160px;
    padding-left: 7px;
    display: flex;
    align-items: center;
}

.unit {
    position: absolute;
    top: 2px;
    left: 3px;
    width: 45px;
    height: 20px;
    padding: 0 4px 0 2px;
    border: 1px solid #333;
    border-radius: 3px;
    background: #0f0f0f;
    display: flex;
    align-items: center;
    justify-content: space-between;
    font-size: 8.500px;
}

.tag {
    position: absolute;
    left: 0;
    width: 46px;
    height: 13px;
    padding-left: 7px;
    line-height: 13px;
    color: #fff;
}

.tag.blue { top: 85px; background: #2f5cf0; width: 50px; }
.tag.light { top: 107px; background: #e6e6e6; color: #111; }
.tag.green { top: 127px; height: 25px; line-height: 11.500px; background: #0b9a7c; padding-top: 1px; }
.tag.red { background: #f23645; }
.tag.r1 { top: 266.500px; }
.tag.r2 { top: 392.500px; }
.tag.yellow { top: 469px; background: #fbe233; color: #111; }

.net {
    position: absolute;
    left: 1328px;
    top: 217px;
    width: 20px;
    height: 29px;
    padding: 19px 1px 1px;
    background: #ececf0;
    font-size: 5px;
    line-height: 9px;
    text-align: center;
    color: #335;
}

.net span {
    display: block;
    background: #c5cbdf;
}

.time-axis {
    position: relative;
    border-bottom: 1px solid #2a2a2a;
    overflow: hidden;
    font-size: 9.300px;
    color: #bcbcbc;
}

#timeAxis {
    display: flex;
    padding-left: 15.300px;
}

#timeAxis span {
    width: 42.600px;
    flex: none;
    text-align: center;
    line-height: 23px;
}

#timeAxis .day {
    font-weight: 600;
}

.cursor-time {
    position: absolute;
    left: 840px;
    top: 0;
    width: 111px;
    height: 19px;
    background: #2f5cf0;
    color: #fff;
    line-height: 22px;
    text-align: center;
    white-space: nowrap;
}

.corner {
    display: grid;
    place-items: center;
    border-bottom: 1px solid #2a2a2a;
}

.ranges {
    grid-column: 1 / 3;
    display: flex;
    align-items: center;
    gap: 9.300px;
    padding: 1px 9px 0 11px;
    font-size: 10.400px;
}

.ranges hr {
    width: 1px;
    height: 18px;
}

.ranges .clock {
    margin-left: auto;
}

.right-tools {
    display: flex;
    flex-direction: column;
    align-items: center;
    padding-left: 1px;
    color: #aaa;
}

.right-tools span {
    position: relative;
    width: 26px;
    height: 34.900px;
    display: grid;
    place-items: center;
    flex: none;
}

.right-tools em {
    top: 3px;
    right: -1px;
}

.push {
    height: 341.500px;
}

.right-tools .round {
    height: 26px;
    margin: 4px 0 7px;
    border-radius: 50%;
    background: #fff;
    color: #111;
}

.right-tools hr {
    width: 24px;
    height: 1px;
    margin: 0 0 4px;
}

/* floating drawing bars */
.floating {
    position: absolute;
    width: 251px;
    height: 29px;
    padding-left: 6px;
    border-radius: 4px;
    background: #1d1d1e;
    box-shadow: 0 1px 4px rgba(0, 0, 0, .6);
    display: flex;
    align-items: center;
    color: #c8c8c8;
}

.floating span {
    width: 29.200px;
    display: grid;
    place-items: center;
    font-weight: 600;
}

.floating .grip {
    width: 8px;
    height: 14px;
    margin-right: 4.500px;
    stroke-width: 2;
    opacity: .4;
}

.floating .color .i {
    padding-bottom: 2px;
}

.floating .color::after {
    content: "";
    width: 17px;
    height: 2.500px;
    margin-top: 2px;
    background: #fff;
}

.edit { left: 1118.500px; top: 559px; }
.favs { left: 1192px; top: 587px; }

/* windows taskbar */
.taskbar {
    display: flex;
    align-items: center;
    background: linear-gradient(90deg, #243c49, #20343f 50%, #1b2a47);
    color: #dfe5e8;
    font-size: 9.800px;
}

.taskbar .win {
    width: 15px;
    height: 15px;
    margin: 0 20px 0 11px;
    fill: #fff;
    stroke: none;
}

.taskbar .search {
    width: 18px;
    height: 18px;
    margin-right: 13px;
    stroke-width: 2.4;
}

.apps {
    display: flex;
}

.app {
    position: relative;
    width: 69.940px;
    height: 31px;
    padding: 0 0 0 4px;
    display: flex;
    align-items: center;
    gap: 2px;
    white-space: nowrap;
}

.app::after {
    content: "";
    position: absolute;
    left: 2px;
    right: 4px;
    bottom: 0;
    height: 2px;
    background: #76b4e4;
}

.app.hover { background: #4c5e64; }
.app.alert { background: #b06c35; }
.app.hover::after { left: 0; right: 1px; }
.app.alert::after { left: 0; right: 0; background: #f07818; }

.ico {
    width: 18px;
    height: 18px;
    border-radius: 3px;
    display: grid;
    place-items: center;
    flex: none;
}

.ico svg {
    width: 14px;
    height: 14px;
}

.black { background: #0c0c0c; color: #fff; }
.atas { fill: #1e9ccf; stroke: none; }
.atas-z { stroke: #0e2f48; stroke-width: 3; }
.netease { background: #e3141e; color: #fff; }
.netease svg { stroke-width: 2.4; }
.wechat { background: #17c160; }
.wechat svg { fill: #fff; stroke: #17c160; }
.okx { background: #000; }
.okx svg { fill: #fff; stroke: none; }
.discord { background: #5865f2; border-radius: 50%; }
.discord svg { fill: #fff; stroke: none; }
.ths { background: #e5252b; border-top: 3px solid #f0c440; color: #fff; }
.ths svg { stroke-width: 2; }
.qq { background: #fff; }
.pfix { background: #f2d98e; }
.ico .k { fill: #111; stroke: none; }
.ico .w { fill: #fff; stroke: none; }
.ico .r { fill: #d8262c; stroke: #d8262c; stroke-width: 2; }
.ico .o { fill: #f3a21b; stroke: none; }
.ico .g { fill: #8cc7a4; stroke: none; }
.qq svg { width: 17px; height: 17px; }
.pfix svg { width: 18px; height: 18px; }

.badge-user {
    position: absolute;
    left: 13px;
    top: 16px;
    width: 10px;
    height: 10px;
    border: 3px solid #8a63b5;
    border-radius: 50%;
    background: #c8b2e0;
}

.badge-user.pale { border-color: #8aa0a8; background: #c9d4d8; }
.badge-user.rec { border-color: #f28ba0; background: #e0242c; }

.tray {
    display: grid;
    grid-template-columns: 18px 20px 17px 19px 19px 16px 57px 34px;
    align-items: center;
    justify-items: center;
    margin-left: auto;
    padding-right: 8px;
}

.tray svg {
    width: 13px;
    height: 13px;
    stroke-width: 1.8;
}

.tray .i {
    width: 10px;
}

.shield {
    width: 12px;
    height: 12px;
    background: #1552e0;
    display: grid;
    place-items: center;
}

.shield svg {
    width: 11px;
    height: 11px;
    stroke-width: 2.5;
}

.mic rect {
    fill: #fff;
}

.tray span {
    font-size: 12px;
}

.date {
    font-size: 9.300px;
    line-height: 14px;
    text-align: center;
}

.tray .notif {
    width: 15px;
    height: 15px;
}
```
FILE: chart.js
```js
const NS = "http://www.w3.org/2000/svg";

function add(parent, tag, attrs) {
    const el = document.createElementNS(NS, tag);
    for (const key in attrs) el.setAttribute(key, attrs[key]);
    parent.appendChild(el);
}

// grid
const grid = document.getElementById("grid");
for (let n = 0; n < 31; n++) {
    add(grid, "path", { class: "grid-line", d: `M${(239.6 + 42.6 * n).toFixed(1)} 63V746` });
}
for (let n = 0; n < 20; n++) {
    add(grid, "path", { class: "grid-line", d: `M203 ${(93.4 + 33.16 * n).toFixed(1)}H1544` });
}

// volume profile: left edge, split, top, bottom
const rows = [
    [1488, 1516, 63, 109.5], [1461, 1503, 110.5, 175.5], [1402, 1468, 177, 241],
    [1296, 1416, 242.5, 307], [1224, 1381, 308.5, 373], [1340, 1436, 374.5, 438.5],
    [1277, 1406, 440, 504.5], [1143, 1344, 506, 570.5], [1320, 1436, 572, 636.5],
    [1344, 1451, 637.5, 702], [1407, 1478, 703.5, 746]
];
const profile = document.getElementById("profile");
rows.forEach(([left, mid, top, bottom], n) => {
    const far = n < 2 ? " far" : "";
    add(profile, "rect", { class: "sell" + far, x: left, y: top, width: mid - left, height: bottom - top });
    add(profile, "rect", { class: "buy" + far, x: mid, y: top, width: 1544 - mid, height: bottom - top });
});

// candles: open close [high low], in thirds of a pixel below base
const series = [
    { base: 420, data: "290 370 280 430,365 395 330 400,395 325 265 490,325 412 320 430,412 325 315 425,325 332,330 350 300 360,350 310 300 370,312 305,305 330 290 345,330 325,325 252 230 340,252 240 230 290,242 235 205 260,240 212 200 265,215 200 185 240,205 165,180 125 105 205,125 155,155 175 120 185,170 178,175 180,180 188 160 195,188 192 180 215,188 265 180 272,265 297,297 190,190 220 185 232,215 250,250 275,275 312 240 340,310 352 285 375,350 408 345 420,408 420 380 425,410 468 395 475,465 475 445 490,470 562 465 600,558 565 500 640,563 540 500 575,560 455 440 678,460 408 400 530,408 330,330 350 300 370,350 325 240 360,310 408 300 420,405 430 385 440,430 448,448 552 440 575,552 545 510 620,545 585 535 600,570 590,570 632 565 640,630 678 620 690,678 772 620 778,772 765 700 800,768 752 710 810,752 728 720 770,725 712 705 745,712 685 660 730,685 714 655 720,714 635 625 720,635 580 575 650,578 615 560 625,612 620 590 680,620 635 600 680,635 622 610 680,622 680 620 690,675 712 650 720,712 738 700 780,738 695 675 770,695 635 620 700,635 645 610 660,645 695 630 700,695 765 690 770,765 695 690 780,695 645 625 705,642 662 600 670,662 565 550 668,580 508 480 590,508 555,555 572 530 578,570 465 380 580,440 460 420 500,460 485 420 495,485 465 440 490,470 462 430 500,420 465,465 545 450 555,548 435 425 560,435 460 425 475,455 535 440 548,520 490,510 460 440 515,490 440,448 440,445 400 385 455,400 375 350 415,378 345 325 390,350 305 290 355,305 330 290 345,305 362 295 380,350 372,370 385 340 390,385 370 350 415,370 395 355 405,390 420 375 450,415 405,405 425 395 450,420 455,450 460,485 430 410 490,450 400,400 345 335 410,342 362 320 385,360 375,370 392 350 400,390 445 385 455,445 420 410 460,425 370 340 430,370 395 355 425,395 325,330 322 270 335,332 310 295 345,310 300 290 315,300 305 265 320,310 300 275 340,310 305 290 340,305 252 235 320,252 -48 -90 258" },
    { base: 100, data: "912 706 690 912,706 792 695 810,792 706 580 792,706 792 700 830,792 768 725 830,768 752 740 900,752 733 720 810,735 678 650 760,678 540 520 725,540 585 462 592,585 440 435 590,442 300 132 445,300 318 255 330,315 323 232 380,323 276 250 380,278 300 245 310,300 325 260 330,325 385 320 550,385 420 380 490,420 395 375 480,400 375 335 450,375 445,445 430 400 450,430 395 385 450,400 385,392 378 360 420,378 408 340 420,405 415,400 410,408 460,458 468 430 472,470 445 430 487,445 405 400 465,405 380 370 430,380 360,362 322 245 370,322 352 312 365,352 418 345 435,418 232 132 420,232 238 180 260,235 262 205 265,262 185 170 305,187 237 180 250,237 190 180 245,192 176 170 225,178 235 160 240,235 252 225 280,250 300 245 305,300 283 270 305,283 325 275 335,325 270 265 335,272 335 265 345,335 358 315 362,358 338 305 362,338 430 335 440,430 410 400 455,408 443 390 445,443 375 360 445,375 388 365 400,385 338 325 390,340 295 285 360,295 280 245 300,282 312 265 318,312 288 280 330,290 318 260 322,315 380 290 390,380 365 360 382,365 338 320 375,340 217 210 342,217 170 160 250,170 202 165 210,202 172 50 235,172 290 155 300,290 255 250 320,257 430 253 450,430 388 370 440,390 415 378 420,415 398 355 418,398 370 360 405,372 322 318 378,322 308 300 330,310 272 265 315,272 278 235 282,278 340 270 345,340 362 335 372,362 290 280 380" }
];
const layer = document.getElementById("candle-layer");
let x = 203.7;
series.forEach(({ base, data }) => {
    data.split(",").forEach(item => {
        let [open, close, high, low] = item.split(" ").map(Number);
        high = high ?? Math.min(open, close) - 8;
        low = low ?? Math.max(open, close) + 8;
        const y = v => base + v / 3;
        const cls = close < open ? "up" : "down";
        add(layer, "path", { class: cls, "stroke-width": 0.7, d: `M${x} ${y(high)}V${y(low)}` });
        add(layer, "rect", {
            class: cls, "stroke-width": 0, x: x - 1.4, y: y(Math.min(open, close)),
            width: 2.8, height: Math.max(1, Math.abs(open - close) / 3)
        });
        x += 3.552;
    });
});

// axis labels
const priceAxis = document.getElementById("priceAxis");
for (let price = 65400; price >= 61600; price -= 200) {
    const tick = document.createElement("div");
    tick.className = "tick";
    tick.textContent = price.toLocaleString("en-US") + ".0";
    priceAxis.appendChild(tick);
}

const timeAxis = document.getElementById("timeAxis");
let hour = 15, day = 13;
for (let n = 0; n < 31; n++) {
    const label = document.createElement("span");
    if (hour === 24) {
        hour = 0;
        day++;
        label.className = "day";
    }
    // the cursor label covers these three
    const covered = n >= 19 && n <= 21;
    if (!covered) {
        label.textContent = hour === 0 ? day : String(hour).padStart(2, "0") + ":00";
    }
    timeAxis.appendChild(label);
    hour += 3;
}
```
